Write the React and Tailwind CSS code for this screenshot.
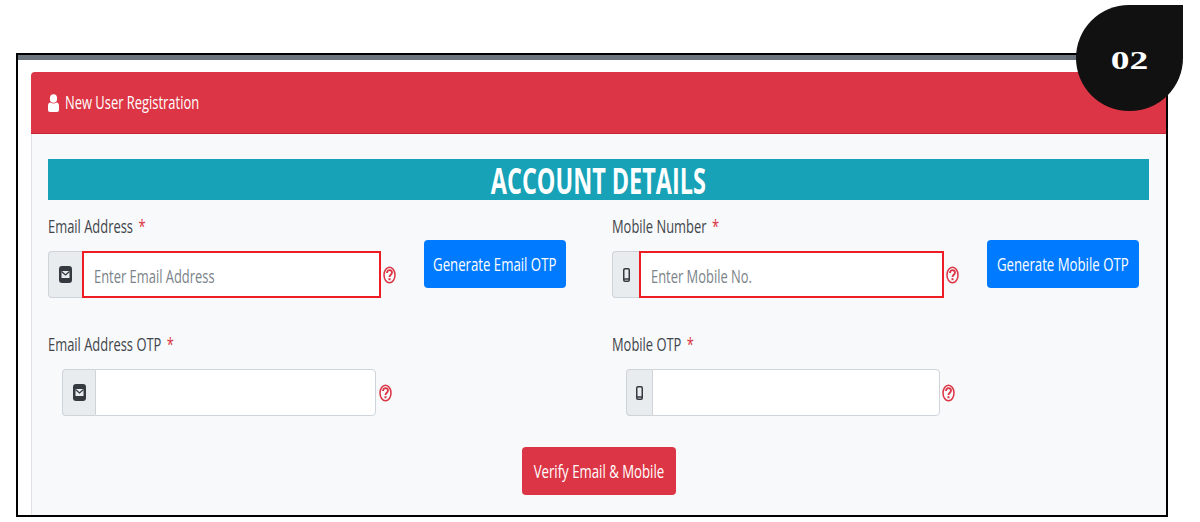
import React from 'react';

const sans = "font-['Open_Sans',sans-serif]";

function MailIcon() {
    return (
        <svg width="13" height="17" viewBox="0 0 13 17" aria-hidden="true">
            <rect width="13" height="17" rx="3" fill="#343a40" />
            <path d="M2.500 5h8v7h-8z" fill="#e9ecef" />
            <path d="M2.500 5.500l4 3.500 4-3.500" fill="none" stroke="#343a40" strokeWidth="1.300" />
        </svg>
    );
}

function PhoneIcon() {
    return (
        <svg width="7" height="14" viewBox="0 0 7 14" aria-hidden="true">
            <rect x="0.750" y="0.750" width="5.500" height="12.500" rx="1.200" fill="none" stroke="#343a40" strokeWidth="1.500" />
            <path d="M1 11h5" stroke="#343a40" strokeWidth="1.500" />
        </svg>
    );
}

function HelpIcon() {
    return (
        <svg width="13" height="18" viewBox="0 0 13 18" aria-hidden="true" className="shrink-0">
            <ellipse cx="6.500" cy="9" rx="5.500" ry="7.800" fill="none" stroke="#dc3545" strokeWidth="1.500" />
            <path d="M4 7c0-1.900 1.100-2.900 2.500-2.900S9 5.100 9 6.600c0 2-2.500 2.300-2.500 4.400" fill="none" stroke="#dc3545" strokeWidth="1.800" />
            <rect x="5.500" y="12.200" width="2" height="2" fill="#dc3545" />
        </svg>
    );
}

function Narrow({ children, className = '' }) {
    return <span className={`inline-block origin-left scale-x-[0.68] whitespace-nowrap ${className}`}>{children}</span>;
}

function Label({ text }) {
    return (
        <div className="h-[24px] text-[19px] leading-[24px] text-[#3f454b]">
            <Narrow>{text} <span className="ml-[3px] text-[#dc3545]">*</span></Narrow>
        </div>
    );
}

function Field({ icon, prependW, inputW, placeholder, error }) {
    return (
        <div className="flex h-[47px] items-stretch">
            <div className={`flex ${prependW} items-center justify-center rounded-l border border-r-0 border-[#ced4da] bg-[#e9ecef]`}>{icon}</div>
            <div className={`flex ${inputW} items-center bg-white pt-[3px] pl-[10px] text-[19px] text-[#7b838a] ${error ? 'border-2 border-[#ee1c25]' : 'rounded-r border border-[#ced4da]'}`}>
                <Narrow>{placeholder}</Narrow>
            </div>
        </div>
    );
}

function ActionButton({ text, className }) {
    return (
        <button className={`flex h-[48px] items-center justify-center overflow-hidden rounded text-[19px] text-white ${className}`}>
            <span className="inline-block scale-x-[0.695] whitespace-nowrap">{text}</span>
        </button>
    );
}

export default function App() {
    return (
        <div className={`relative h-[522px] w-[1200px] overflow-hidden bg-white pt-[53px] pl-[16px] ${sans}`}>
            <div className="h-[464px] w-[1152px] overflow-hidden border-2 border-black">
                <div className="h-[5px] bg-[#6c757d]" />
                <div className="pt-[12px] pl-[13px]">
                    <div className="flex h-[62px] items-center gap-[6px] rounded-t border-b border-[#c82333] bg-[#dc3545] pl-[17px] text-[19px] text-white">
                        <svg width="11" height="18" viewBox="0 0 11 18" aria-hidden="true">
                            <ellipse cx="5.500" cy="4.500" rx="3.600" ry="4.300" fill="#fff" />
                            <path d="M0 11.500c0-2 1.200-3 2.500-3 1 .6 2 1 3 1s2-.4 3-1c1.300 0 2.500 1 2.500 3V16c0 1.200-.8 2-2 2H2c-1.200 0-2-.8-2-2z" fill="#fff" />
                        </svg>
                        <Narrow>New User Registration</Narrow>
                    </div>
                    <div className="h-[400px] border-l border-[#dfe3e7] bg-[#f8f9fa] pt-[25px] pl-[16px]">
                        <div className="flex h-[41px] w-[1101px] items-center justify-center bg-[#17a2b8] pt-[3px] text-[36px] font-bold text-white">
                            <span className="inline-block scale-x-[0.65] whitespace-nowrap">ACCOUNT DETAILS</span>
                        </div>

                        <div className="mt-[14px] flex">
                            <div className="w-[564px]">
                                <Label text="Email Address" />
                                <div className="flex">
                                    <div className="flex items-center gap-[2px] pt-[13px]">
                                        <Field icon={<MailIcon />} prependW="w-[34px]" inputW="w-[299px]" placeholder="Enter Email Address" error />
                                        <HelpIcon />
                                    </div>
                                    <ActionButton text="Generate Email OTP" className="ml-[28px] mt-[2px] w-[142px] bg-[#007bff]" />
                                </div>
                            </div>
                            <div>
                                <Label text="Mobile Number" />
                                <div className="flex">
                                    <div className="flex items-center gap-[2px] pt-[13px]">
                                        <Field icon={<PhoneIcon />} prependW="w-[27px]" inputW="w-[305px]" placeholder="Enter Mobile No." error />
                                        <HelpIcon />
                                    </div>
                                    <ActionButton text="Generate Mobile OTP" className="ml-[28px] mt-[2px] w-[152px] bg-[#007bff]" />
                                </div>
                            </div>
                        </div>

                        <div className="mt-[34px] flex">
                            <div className="w-[564px]">
                                <Label text="Email Address OTP" />
                                <div className="flex items-center gap-[3px] pt-[13px] pl-[14px]">
                                    <Field icon={<MailIcon />} prependW="w-[33px]" inputW="w-[281px]" />
                                    <HelpIcon />
                                </div>
                            </div>
                            <div>
                                <Label text="Mobile OTP" />
                                <div className="flex items-center gap-[2px] pt-[13px] pl-[14px]">
                                    <Field icon={<PhoneIcon />} prependW="w-[26px]" inputW="w-[288px]" />
                                    <HelpIcon />
                                </div>
                            </div>
                        </div>

                        <div className="mt-[31px] flex w-[1101px] justify-center">
                            <ActionButton text="Verify Email & Mobile" className="w-[154px] bg-[#dc3545]" />
                        </div>
                    </div>
                </div>
            </div>

            {/* numbered corner badge */}
            <div className="absolute top-[5px] left-[1076px] flex h-[106px] w-[107px] items-center justify-center rounded-full rounded-tr-none bg-[#111111] pt-[4px] font-['Liberation_Serif',serif] text-[25px] leading-none font-bold text-white">
                <span className="inline-block scale-x-[1.5]">02</span>
            </div>
        </div>
    );
}
